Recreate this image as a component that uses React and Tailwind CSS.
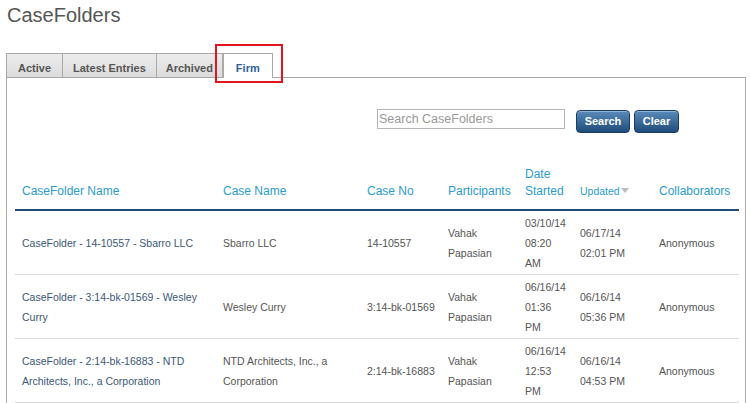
import React from "react";

const rows = [
  {
    folder: "CaseFolder - 14-10557 - Sbarro LLC",
    caseName: "Sbarro LLC",
    caseNo: "14-10557",
    participants: "Vahak Papasian",
    started: "03/10/14 08:20 AM",
    updated: "06/17/14 02:01 PM",
    collab: "Anonymous",
  },
  {
    folder: "CaseFolder - 3:14-bk-01569 - Wesley Curry",
    caseName: "Wesley Curry",
    caseNo: "3:14-bk-01569",
    participants: "Vahak Papasian",
    started: "06/16/14 01:36 PM",
    updated: "06/16/14 05:36 PM",
    collab: "Anonymous",
  },
  {
    folder: "CaseFolder - 2:14-bk-16883 - NTD Architects, Inc., a Corporation",
    caseName: "NTD Architects, Inc., a Corporation",
    caseNo: "2:14-bk-16883",
    participants: "Vahak Papasian",
    started: "06/16/14 12:53 PM",
    updated: "06/16/14 04:53 PM",
    collab: "Anonymous",
  },
];

const tabs = [
  { label: "Active", cls: "px-[11px]" },
  { label: "Latest Entries", cls: "px-[10px] border-l-0" },
  { label: "Archived", cls: "px-[9px] border-l-0" },
];

export default function App() {
  return (
    <div className="relative min-h-[403px] bg-white pl-[6px] pr-[4px] font-['Liberation_Sans',Arial,sans-serif]">
      <h1 className="pt-[3px] pl-[1px] text-[20px] leading-[24px] text-[#555]">CaseFolders</h1>

      {/* tabs */}
      <div className="mt-[26px] flex items-end">
        {tabs.map((t) => (
          <div
            key={t.label}
            className={
              "h-[24px] border border-b-0 border-[#a9a9a9] bg-gradient-to-b from-[#ececec] to-[#dcdcdc] pt-[7px] text-[11px] font-bold leading-[14px] text-[#555] " +
              t.cls
            }
          >
            {t.label}
          </div>
        ))}
        <div className="relative z-10 -mb-[1px] h-[25px] border border-b-0 border-[#a9a9a9] bg-white px-[12px] pt-[7px] text-[11px] font-bold leading-[14px] text-[#2e64a0]">
          Firm
        </div>
      </div>

      {/* panel */}
      <div className="h-[326px] overflow-hidden border border-b-0 border-[#a9a9a9] px-[8px] pr-[6px]">
        <div className="flex items-start justify-end pt-[31px] pr-[60px]">
          <input
            type="text"
            placeholder="Search CaseFolders"
            className="h-[20px] w-[188px] border border-[#b5b5b5] px-[1px] text-[12.5px] text-[#444] placeholder:text-[#999] outline-none"
          />
          <button className="ml-[11px] mt-[1px] h-[23px] w-[54px] rounded-[4px] border border-[#1b3d61] bg-gradient-to-b from-[#5a8bbb] to-[#1e4d7b] text-[11px] font-bold text-white shadow-[inset_0_1px_0_rgba(255,255,255,0.35)]">
            Search
          </button>
          <button className="ml-[4px] mt-[1px] h-[23px] w-[45px] rounded-[4px] border border-[#1b3d61] bg-gradient-to-b from-[#5a8bbb] to-[#1e4d7b] text-[11px] font-bold text-white shadow-[inset_0_1px_0_rgba(255,255,255,0.35)]">
            Clear
          </button>
        </div>

        <table className="mt-[25px] w-[724px] table-fixed border-collapse">
          <colgroup>
            <col className="w-[201px]" />
            <col className="w-[144px]" />
            <col className="w-[81px]" />
            <col className="w-[77px]" />
            <col className="w-[55px]" />
            <col className="w-[79px]" />
            <col className="w-[87px]" />
          </colgroup>
          <thead>
            <tr className="border-b-2 border-[#1f4b75] text-left text-[12px] font-normal leading-[17px] text-[#2b9bcf]">
              <th className="px-[7px] pt-[8px] pb-[9px] align-bottom font-normal">CaseFolder Name</th>
              <th className="px-[7px] pt-[8px] pb-[9px] align-bottom font-normal">Case Name</th>
              <th className="px-[7px] pt-[8px] pb-[9px] align-bottom font-normal">Case No</th>
              <th className="px-[7px] pt-[8px] pb-[9px] align-bottom font-normal">Participants</th>
              <th className="px-[7px] pt-[8px] pb-[9px] align-bottom font-normal">
                Date
                <br />
                Started
              </th>
              <th className="px-[7px] pt-[8px] pb-[9px] align-bottom font-normal">
                <span className="text-[10.5px]">Updated</span>
                <span className="ml-[1px] inline-block h-0 w-0 border-x-[4.5px] border-t-[5px] border-x-transparent border-t-[#bdbdbd] align-[2px]" />
              </th>
              <th className="px-[7px] pt-[8px] pb-[9px] align-bottom font-normal">Collaborators</th>
            </tr>
          </thead>
          <tbody>
            {rows.map((r) => (
              <tr key={r.folder} className="border-b-[1.5px] border-[#dadada] text-[10.5px] leading-[20px] text-[#555]">
                <td className="px-[7px] py-[1.5px] align-middle text-[#3a5877]">{r.folder}</td>
                <td className="px-[7px] py-[1.5px] align-middle">{r.caseName}</td>
                <td className="whitespace-nowrap px-[7px] py-[1.5px] align-middle">{r.caseNo}</td>
                <td className="px-[7px] py-[1.5px] align-middle">{r.participants}</td>
                <td className="px-[7px] py-[1.5px] align-middle">
                  <div className="w-[40px]">{r.started}</div>
                </td>
                <td className="px-[7px] py-[1.5px] align-middle">{r.updated}</td>
                <td className="px-[7px] py-[1.5px] align-middle">{r.collab}</td>
              </tr>
            ))}
          </tbody>
        </table>
      </div>

      {/* highlight box */}
      <div className="pointer-events-none absolute left-[215px] top-[44px] h-[39px] w-[68px] border-2 border-[#e3151d]" />
    </div>
  );
}
